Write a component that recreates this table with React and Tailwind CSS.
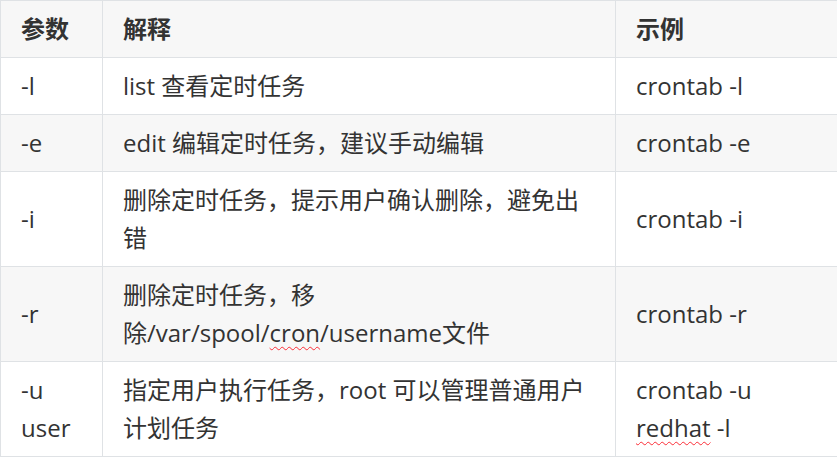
import React from 'react';

const rows = [
  { flag: '-l', desc: 'list 查看定时任务', example: 'crontab -l' },
  { flag: '-e', desc: 'edit 编辑定时任务，建议手动编辑', example: 'crontab -e' },
  { flag: '-i', desc: '删除定时任务，提示用户确认删除，避免出错', example: 'crontab -i' },
  {
    flag: '-r',
    desc: (
      <>
        删除定时任务，移除/var/spool/
        <span className="underline decoration-wavy decoration-red-500 decoration-1 underline-offset-4">cron</span>
        /username文件
      </>
    ),
    example: 'crontab -r',
  },
  {
    flag: '-u user',
    desc: '指定用户执行任务，root 可以管理普通用户计划任务',
    example: (
      <>
        crontab -u{' '}
        <span className="underline decoration-wavy decoration-red-500 decoration-1 underline-offset-4">redhat</span> -l
      </>
    ),
  },
];

const cell = 'border border-[#dfe2e5] px-5 py-[9px] align-middle text-left';

const App = () => {
  return (
    <div
      className="bg-white w-[837px] h-[457px] overflow-hidden text-[24px] leading-[38px] text-[#333]"
      style={{ fontFamily: '"Open Sans", "Noto Sans CJK SC", sans-serif' }}
    >
      <table className="table-fixed border-collapse w-[837px]">
        <thead>
          <tr className="bg-[#f7f7f7]">
            <th className={`${cell} w-[102px] font-bold`}>参数</th>
            <th className={`${cell} w-[513px] font-bold`}>解释</th>
            <th className={`${cell} w-[222px] font-bold`}>示例</th>
          </tr>
        </thead>
        <tbody>
          {rows.map((row, i) => (
            <tr key={i} className={i % 2 === 1 ? 'bg-[#f7f7f7]' : 'bg-white'}>
              <td className={cell}>{row.flag}</td>
              <td className={cell}>{row.desc}</td>
              <td className={cell}>{row.example}</td>
            </tr>
          ))}
        </tbody>
      </table>
    </div>
  );
};

export default App;
